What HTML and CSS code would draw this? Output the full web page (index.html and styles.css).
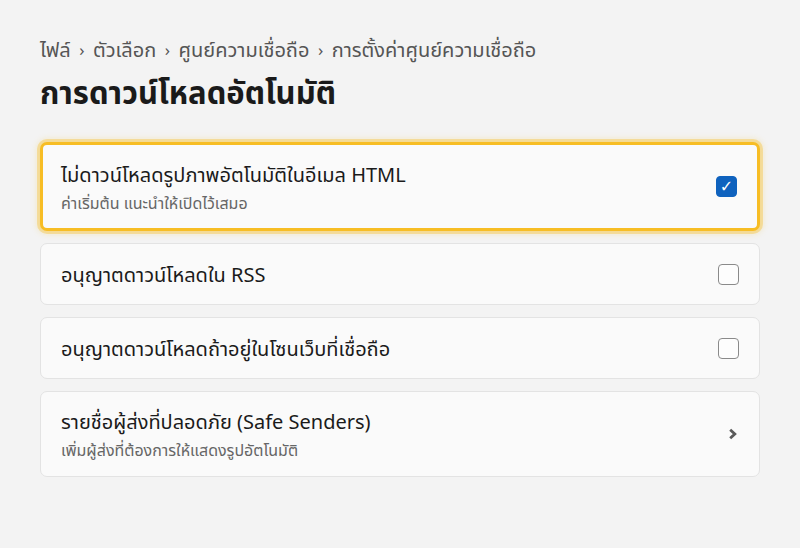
FILE: index.html
```html
<!DOCTYPE html>
<html lang="th">
<head>
<meta charset="utf-8">
<link rel="stylesheet" href="styles.css">
</head>
<body>
<main class="page">
  <nav class="crumbs">
    <span>ไฟล์</span><span class="sep">›</span><span>ตัวเลือก</span><span class="sep">›</span><span>ศูนย์ความเชื่อถือ</span><span class="sep">›</span><span>การตั้งค่าศูนย์ความเชื่อถือ</span>
  </nav>
  <h1 class="title">การดาวน์โหลดอัตโนมัติ</h1>
  <div class="list">
    <div class="card focused">
      <div class="text">
        <div class="label">ไม่ดาวน์โหลดรูปภาพอัตโนมัติในอีเมล HTML</div>
        <div class="sub">ค่าเริ่มต้น แนะนำให้เปิดไว้เสมอ</div>
      </div>
      <span class="box checked">✓</span>
    </div>
    <div class="card">
      <div class="text">
        <div class="label">อนุญาตดาวน์โหลดใน RSS</div>
      </div>
      <span class="box"></span>
    </div>
    <div class="card">
      <div class="text">
        <div class="label">อนุญาตดาวน์โหลดถ้าอยู่ในโซนเว็บที่เชื่อถือ</div>
      </div>
      <span class="box"></span>
    </div>
    <div class="card tall">
      <div class="text">
        <div class="label">รายชื่อผู้ส่งที่ปลอดภัย (Safe Senders)</div>
        <div class="sub">เพิ่มผู้ส่งที่ต้องการให้แสดงรูปอัตโนมัติ</div>
      </div>
      <svg class="chev" width="10" height="12" viewBox="0 0 10 12"><path d="M2.2 1.8 L6.8 6 L2.2 10.2" fill="none" stroke="#5a5a5a" stroke-width="2.8"/></svg>
    </div>
  </div>
</main>
</body>
</html>
```
FILE: styles.css
```css
html, body {
  margin: 0;
  background: #f3f3f3;
}
body {
  font-family: "Noto Sans Thai", "Noto Sans", sans-serif;
  color: #1b1b1b;
}
.page {
  padding: 36px 40px 0 40px;
}
.crumbs {
  font-size: 20px;
  color: #555;
  display: flex;
  gap: 8.5px;
  line-height: 30px;
}
.crumbs .sep {
  font-size: 17px;
}
.title {
  margin: 9px 0 27px 0;
  font-size: 31px;
  font-weight: 700;
  color: #1a1a1a;
  line-height: 40px;
}
.list {
  display: flex;
  flex-direction: column;
  gap: 12px;
}
.card {
  background: #fafafa;
  border: 1px solid #e3e3e3;
  border-radius: 7px;
  display: flex;
  align-items: center;
  padding: 0 20px;
  min-height: 60px;
}
.card.focused {
  border: 3px solid #f7bd24;
  box-shadow: 0 0 0 3px rgba(247, 189, 36, 0.35), 0 0 6px 3px rgba(247, 189, 36, 0.22);
  min-height: 83px;
  padding: 0 18px;
}
.card.tall {
  min-height: 84px;
}
.text {
  flex: 1;
  padding-top: 4px;
}
.label {
  font-size: 20px;
  line-height: 26px;
  color: #1b1b1b;
}
.sub {
  font-size: 16px;
  color: #666;
  margin-top: 4px;
  line-height: 22px;
}
.box {
  width: 21px;
  height: 21px;
  border: 1.5px solid #8a8a8a;
  border-radius: 4px;
  background: #fdfdfd;
  box-sizing: border-box;
  display: flex;
  align-items: center;
  justify-content: center;
}
.box.checked {
  background: #0f62be;
  border-color: #0f62be;
  color: #fff;
  font-size: 16px;
  line-height: 1;
  font-family: "DejaVu Sans", sans-serif;
  margin-right: 2px;
}
.chev {
  margin-right: 1px;
}
```
